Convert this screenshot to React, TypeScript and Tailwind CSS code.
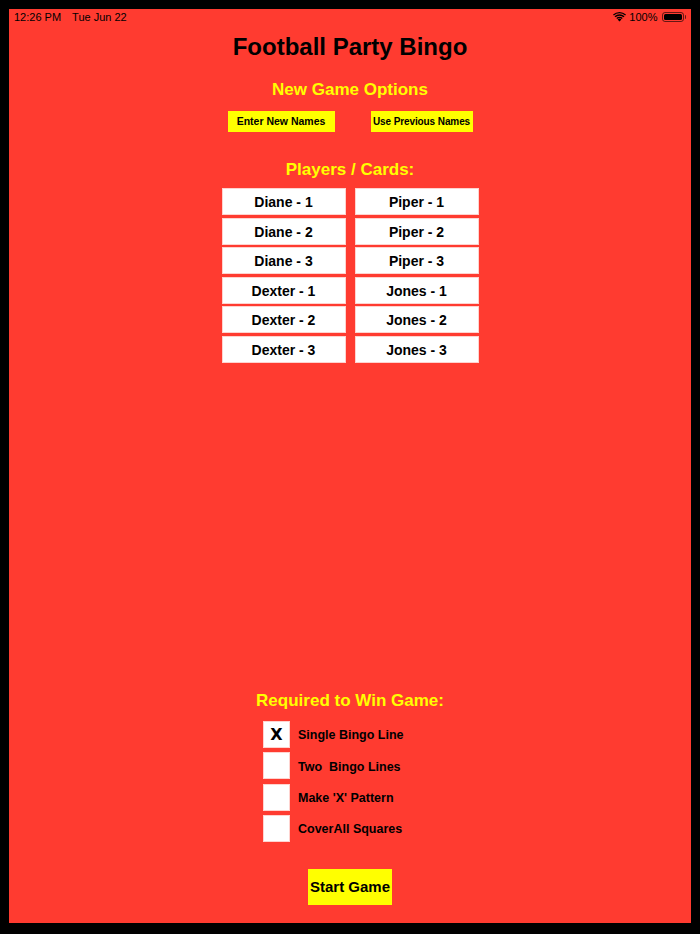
import React from 'react';

const PLAYERS = [
  ['Diane - 1', 'Piper - 1'],
  ['Diane - 2', 'Piper - 2'],
  ['Diane - 3', 'Piper - 3'],
  ['Dexter - 1', 'Jones - 1'],
  ['Dexter - 2', 'Jones - 2'],
  ['Dexter - 3', 'Jones - 3'],
];

const WIN_OPTIONS = [
  { label: 'Single Bingo Line', checked: true },
  { label: 'Two  Bingo Lines', checked: false },
  { label: "Make 'X' Pattern", checked: false },
  { label: 'CoverAll Squares', checked: false },
];

function StatusBar() {
  return (
    <div className="flex h-[16px] items-center justify-between pl-[5px] pr-[5px] text-[11px] text-black font-['Liberation_Sans',sans-serif]">
      <div className="flex items-center gap-[11px]">
        <span>12:26 PM</span>
        <span>Tue Jun 22</span>
      </div>
      <div className="flex items-center gap-[3px]">
        {/* wifi */}
        <svg width="13" height="10" viewBox="0 0 13 10">
          <path d="M6.5 9.6 L8.4 7.5 A2.8 2.8 0 0 0 4.6 7.5 Z" fill="#000" />
          <path d="M3.3 6.1 A4.6 4.6 0 0 1 9.7 6.1 L8.8 7 A3.4 3.4 0 0 0 4.2 7 Z" fill="#000" />
          <path d="M1.5 4.3 A7.2 7.2 0 0 1 11.5 4.3 L10.5 5.3 A5.8 5.8 0 0 0 2.5 5.3 Z" fill="#000" />
          <path d="M0 2.6 A9.5 9.5 0 0 1 13 2.6 L12.1 3.5 A8.2 8.2 0 0 0 0.9 3.5 Z" fill="#000" />
        </svg>
        <span>100%</span>
        {/* battery */}
        <div className="ml-[1px] flex items-center">
          <div className="h-[10px] w-[22px] rounded-[3px] border border-black/60 p-[1px]">
            <div className="h-full w-full rounded-[1.5px] bg-black" />
          </div>
          <div className="ml-[1px] h-[4px] w-[1.5px] rounded-r-sm bg-black/60" />
        </div>
      </div>
    </div>
  );
}

export default function App() {
  return (
    <div className="bg-black pt-[9px] pl-[9px] pr-[9px] pb-[11px] font-['Liberation_Sans',sans-serif]">
      <div className="flex h-[914px] flex-col bg-[#ff3b30]">
        <StatusBar />

        {/* Title */}
        <h1 className="mt-[8px] text-center text-[24px] font-bold leading-[28px] text-black">
          Football Party Bingo
        </h1>

        {/* New game options */}
        <h2 className="mt-[19px] text-center text-[17px] font-bold leading-[20px] text-[#ffff00]">
          New Game Options
        </h2>
        <div className="mt-[11px] flex justify-center gap-[36px]">
          <button className="flex h-[21px] w-[107px] items-center justify-center whitespace-nowrap bg-[#ffff00] text-[10.5px] font-bold text-black">
            Enter New Names
          </button>
          <button className="flex h-[21px] w-[102px] items-center justify-center whitespace-nowrap bg-[#ffff00] text-[10px] font-bold tracking-[-0.1px] text-black">
            Use Previous Names
          </button>
        </div>

        {/* Players / Cards */}
        <h2 className="mt-[28px] text-center text-[17px] font-bold leading-[20px] text-[#ffff00]">
          Players / Cards:
        </h2>
        <div className="mx-auto mt-[8px] grid grid-cols-2 gap-x-[9px] gap-y-[2.6px]">
          {PLAYERS.flat().map((name) => (
            <div
              key={name}
              className="flex h-[27px] w-[124px] items-center justify-center border border-[#ffd3cf] bg-white pt-[2px] text-[14px] font-bold text-black"
            >
              {name}
            </div>
          ))}
        </div>

        {/* Win requirements */}
        <div className="mt-auto flex flex-col items-center pb-[18px]">
          <h2 className="text-center text-[17px] font-bold leading-[20px] text-[#ffff00]">
            Required to Win Game:
          </h2>
          <div className="mt-[10px] ml-[254px] flex flex-col gap-[4.3px] self-start">
            {WIN_OPTIONS.map((opt) => (
              <div key={opt.label} className="flex items-center gap-[8px]">
                <div className="flex h-[27px] w-[27px] items-center justify-center border border-[#ffd3cf] bg-white text-[16px] font-semibold leading-none text-black font-['DejaVu_Sans',sans-serif]">
                  {opt.checked ? 'X' : ''}
                </div>
                <span className="whitespace-pre pt-[2px] text-[12.5px] font-bold text-black">
                  {opt.label}
                </span>
              </div>
            ))}
          </div>
          <button className="mt-[27px] flex h-[36px] w-[84px] items-center justify-center bg-[#ffff00] pt-[1px] text-[15px] font-bold text-black">
            Start Game
          </button>
        </div>
      </div>
    </div>
  );
}
